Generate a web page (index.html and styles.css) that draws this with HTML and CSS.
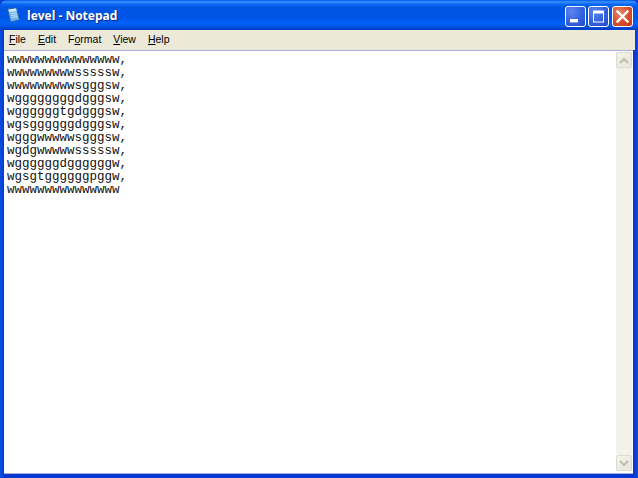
FILE: index.html
```html
<!DOCTYPE html>
<html lang="en">
<head>
<meta charset="utf-8">
<title>level - Notepad</title>
<link rel="stylesheet" href="styles.css">
</head>
<body>
<div class="window">
  <header class="titlebar">
    <svg class="app-icon" width="16" height="16" viewBox="0 0 16 16">
      <path d="M1.5 2 L10.5 0.8 L13.5 13 L4.5 15 Z" fill="#6fb2ea" stroke="#1f63b4" stroke-width="1"/>
      <path d="M2.5 2.5 L10 1.5 L10.6 4 L3.2 5 Z" fill="#d9ecfb"/>
      <path d="M4.5 6.5 L10.8 5.7 M5 8.5 L11.3 7.7 M5.5 10.5 L11.8 9.7" stroke="#c5e1f8" stroke-width="1"/>
    </svg>
    <span class="title">level - Notepad</span>
    <div class="controls">
      <button class="ctl ctl-min" aria-label="Minimize"><svg width="19" height="19" viewBox="0 0 19 19"><rect x="4" y="12" width="8" height="3.4" fill="#fff"/></svg></button>
      <button class="ctl ctl-max" aria-label="Maximize"><svg width="19" height="19" viewBox="0 0 19 19"><path d="M4 3.5h11v12h-11z M5 6.5v8h9v-8z" fill="#fff" fill-rule="evenodd"/></svg></button>
      <button class="ctl ctl-close" aria-label="Close"><svg width="19" height="19" viewBox="0 0 19 19"><path d="M4.5 4.5 L14.5 14.5 M14.5 4.5 L4.5 14.5" stroke="#fff" stroke-width="2.3" stroke-linecap="square"/></svg></button>
    </div>
  </header>
  <nav class="menubar">
    <span class="menu"><u>F</u>ile</span>
    <span class="menu"><u>E</u>dit</span>
    <span class="menu">F<u>o</u>rmat</span>
    <span class="menu"><u>V</u>iew</span>
    <span class="menu"><u>H</u>elp</span>
  </nav>
  <main class="client">
    <pre class="editor">wwwwwwwwwwwwwww,
wwwwwwwwwsssssw,
wwwwwwwwwsgggsw,
wggggggggdgggsw,
wggggggtgdgggsw,
wgsggggggdgggsw,
wgggwwwwwsgggsw,
wgdgwwwwwsssssw,
wggggggdggggggw,
wgsgtggggggpggw,
wwwwwwwwwwwwwww</pre>
    <aside class="scrollbar">
      <div class="sb-btn"><svg width="10" height="7" viewBox="0 0 10 7"><path d="M1 6 L5 2 L9 6" fill="none" stroke="#bcc2ae" stroke-width="2.2"/></svg></div>
      <div class="sb-track"></div>
      <div class="sb-btn"><svg width="10" height="7" viewBox="0 0 10 7"><path d="M1 1 L5 5 L9 1" fill="none" stroke="#bcc2ae" stroke-width="2.2"/></svg></div>
    </aside>
  </main>
</div>
</body>
</html>
```
FILE: styles.css
```css
* { box-sizing: border-box; }
html, body { margin: 0; padding: 0; background: #0a3fd0; }
body { width: 638px; height: 478px; overflow: hidden; }
.window {
  width: 638px;
  height: 478px;
  display: flex;
  flex-direction: column;
  border-radius: 7px 7px 0 0;
  overflow: hidden;
  background: linear-gradient(to right, #0a50e0 0, #0838d0 4px, #0838d0 634px, #0a4ae0 638px);
}
.titlebar {
  height: 30px;
  flex: none;
  display: flex;
  align-items: center;
  padding: 2px 5px 0 6px;
  background: linear-gradient(to bottom, #0058e6 0, #3a93ff 2px, #0a6af2 4px, #0055e5 8px, #0055e8 18px, #0062f7 23px, #0058ea 26px, #0046d0 28px, #003dc4 30px);
}
.app-icon { flex: none; margin-top: -2px; }
.title {
  margin-left: 5px;
  font: bold 12px/1 "Open Sans", "Liberation Sans", sans-serif;
  color: #fff;
  text-shadow: 1px 1px 1px #0a2a90;
}
.controls { margin-left: auto; display: flex; gap: 2px; }
.ctl {
  width: 21px;
  height: 21px;
  padding: 0;
  border: 1px solid #fff;
  border-radius: 3px;
  display: flex;
  align-items: center;
  justify-content: center;
}
.ctl-min, .ctl-max { background: radial-gradient(circle at 30% 25%, #5c86ef 0, #3a68e4 45%, #2148c8 100%); }
.ctl-close { background: radial-gradient(circle at 35% 30%, #e8876a 0, #d8512e 50%, #c23a18 100%); margin-left: 1px; }
.menubar {
  height: 20px;
  flex: none;
  margin: 0 3px 0 4px;
  padding: 0 0 1px 5px;
  background: #ece9d8;
  display: flex;
  align-items: center;
  gap: 12px;
  font: 10.5px/1 "Liberation Sans", sans-serif;
  color: #000;
}
.menu { flex: none; }
.client {
  flex: 1;
  min-height: 0;
  margin: 0 5px 4px 4px;
  padding: 1px 1px 2px 0;
  display: flex;
  background: #fff;
  border-top: 1px solid #a9aedb;
  border-bottom: 1px solid #a9aedb;
}
.editor {
  flex: 1;
  margin: 0;
  padding: 2px 0 0 3px;
  background: #fff;
  color: #111;
  font: 12.5px/13px "Liberation Mono", monospace;
}
.scrollbar {
  width: 16px;
  flex: none;
  display: flex;
  flex-direction: column;
  background: #f4f3ec;
}
.sb-track { flex: 1; background: #f3f2ea; }
.sb-btn {
  height: 16px;
  flex: none;
  display: flex;
  align-items: center;
  justify-content: center;
  background: linear-gradient(135deg, #f4f4ec, #e6e5da);
  border: 1px solid #dcdbd0;
  border-radius: 2px;
}
```
